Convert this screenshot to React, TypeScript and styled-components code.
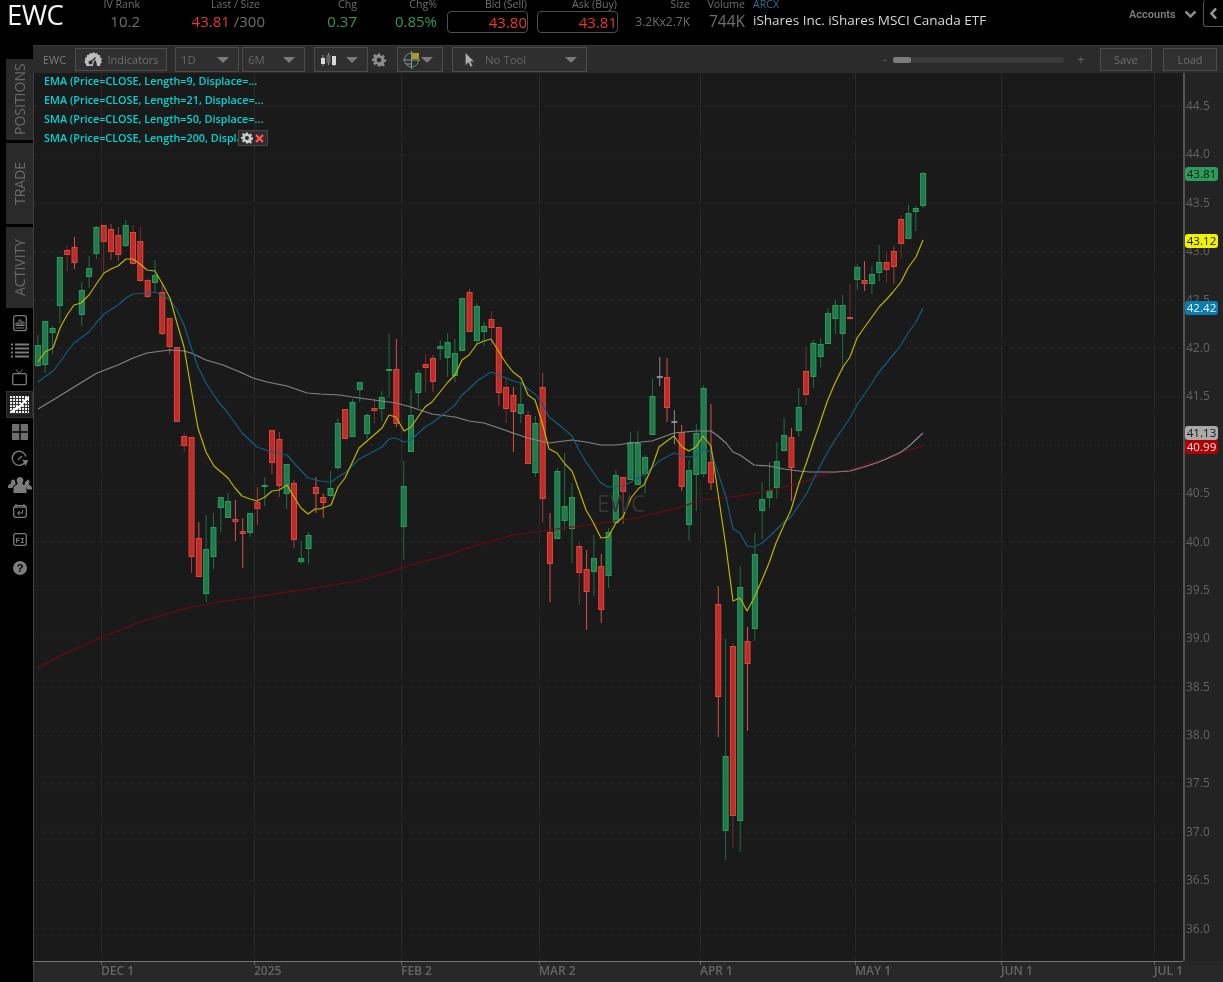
import React from "react";
import styled, { createGlobalStyle } from "styled-components";

const Global = createGlobalStyle`
  html, body { margin: 0; padding: 0; background: #000; }
  * { box-sizing: border-box; }
`;

const FONT = `"Open Sans", "Liberation Sans", sans-serif`;

const Page = styled.div`
  width: 1223px;
  height: 982px;
  overflow: hidden;
  background: #000;
  display: flex;
  flex-direction: column;
  font-family: ${FONT};
  filter: blur(0.35px);
`;

/* ---------- header ---------- */
const Header = styled.header`
  height: 45px;
  display: flex;
  align-items: flex-start;
  padding-left: 7px;
  flex: none;
`;
const Symbol = styled.div`
  width: 65px;
  font-size: 27.5px;
  line-height: 30px;
  color: #f4f4f4;
  font-weight: 400;
  letter-spacing: -0.6px;
`;
const Quote = styled.div<{ $w: number; $ml?: number }>`
  width: ${(p) => p.$w}px;
  margin-left: ${(p) => p.$ml ?? 0}px;
  flex: none;
  display: flex;
  flex-direction: column;
  align-items: flex-end;
`;
const QuoteLabel = styled.div<{ $pr?: number }>`
  height: 11px;
  line-height: 8px;
  padding-right: ${(p) => p.$pr ?? 0}px;
  font-size: 10.6px;
  color: #6d6d6d;
  white-space: nowrap;
`;
const QuoteValue = styled.div<{ $c?: string; $s?: number }>`
  height: 22px;
  line-height: 21px;
  font-size: ${(p) => p.$s ?? 15}px;
  color: ${(p) => p.$c ?? "#6f6f6f"};
  white-space: nowrap;
`;
const Tone = styled.span<{ $c: string }>`
  color: ${(p) => p.$c};
`;
const PriceBox = styled.div`
  width: 81px;
  height: 22px;
  line-height: 20px;
  text-align: right;
  font-size: 15px;
  color: #e63a30;
  border: 1px solid #4e4e4e;
  border-radius: 4px;
`;
const BoxQuote = styled(Quote)`
  align-items: stretch;
  text-align: right;
`;
const Identity = styled.div`
  margin-left: 8px;
  width: 240px;
  flex: none;
`;
const Exchange = styled.div`
  height: 11px;
  line-height: 8px;
  font-size: 10.6px;
  color: #2f6f8f;
`;
const FundName = styled.div`
  height: 22px;
  line-height: 19px;
  font-size: 13.5px;
  color: #d8d8d8;
  white-space: nowrap;
`;
const Accounts = styled.div`
  margin-left: 136px;
  width: 74px;
  flex: none;
  display: flex;
  align-items: center;
  gap: 8px;
  height: 28px;
  font-family: Roboto, "Liberation Sans", sans-serif;
  font-size: 11px;
  font-weight: 600;
  color: #7e7e7e;
  white-space: nowrap;
`;
const BackButton = styled.div`
  width: 20px;
  height: 27px;
  flex: none;
  border: 1px solid #555;
  border-right: none;
  border-top: none;
  border-radius: 3px 0 0 3px;
  display: flex;
  align-items: center;
  justify-content: center;
`;

/* ---------- body ---------- */
const Body = styled.div`
  flex: 1;
  display: flex;
  min-height: 0;
`;
const Rail = styled.nav`
  width: 33px;
  flex: none;
  display: flex;
  flex-direction: column;
  align-items: flex-end;
  padding-top: 14px;
`;
const SideTab = styled.div`
  width: 27px;
  height: 81px;
  margin-bottom: 3px;
  background: #2a2a2a;
  color: #6a6a6a;
  font-size: 14px;
  writing-mode: vertical-rl;
  transform: rotate(180deg);
  text-align: center;
  line-height: 27px;
`;
const RailIcon = styled.div<{ $active?: boolean; $h: number }>`
  width: 27px;
  height: ${(p) => p.$h}px;
  flex: none;
  background: ${(p) => (p.$active ? "#1e1e1e" : "transparent")};
  border: ${(p) => (p.$active ? "1px solid #333" : "none")};
  display: flex;
  align-items: center;
  justify-content: center;
`;
const RailIcons = styled.div`
  display: flex;
  flex-direction: column;
  margin-top: -1px;
`;

const Panel = styled.main`
  flex: 1;
  min-width: 0;
  display: flex;
  flex-direction: column;
  background: #272727;
`;
const Toolbar = styled.div`
  height: 28px;
  flex: none;
  background: #2b2b2b;
  border-top: 1px solid #3a3a3a;
  display: flex;
  align-items: center;
  padding-left: 10px;
  color: #717171;
  font-size: 11px;
`;
const ChartSymbol = styled.span`
  width: 32px;
  flex: none;
  color: #7c7c7c;
`;
const ToolButton = styled.div<{ $w: number; $ml?: number }>`
  width: ${(p) => p.$w}px;
  margin-left: ${(p) => p.$ml ?? 0}px;
  height: 23px;
  flex: none;
  border: 1px solid #4d4d4d;
  background: #303030;
  display: flex;
  align-items: center;
  justify-content: center;
  gap: 5px;
  color: #6e6e6e;
  font-size: 11px;
`;
const SelectBox = styled.div<{ $w: number; $ml?: number; $pl?: number }>`
  width: ${(p) => p.$w}px;
  margin-left: ${(p) => p.$ml ?? 0}px;
  height: 25px;
  flex: none;
  border: 1px solid #4d4d4d;
  background: #2f2f2f;
  display: flex;
  align-items: center;
  justify-content: space-between;
  padding: 0 9px 0 ${(p) => p.$pl ?? 5}px;
  color: #666;
  font-size: 11.4px;
`;
const SelectLabel = styled.span`
  display: flex;
  align-items: center;
  gap: 9px;
`;
const Caret = styled.span`
  width: 0;
  height: 0;
  border-left: 6px solid transparent;
  border-right: 6px solid transparent;
  border-top: 6px solid #7a7a7a;
  flex: none;
`;
const PlainIcon = styled.span<{ $ml: number }>`
  margin-left: ${(p) => p.$ml}px;
  display: flex;
  flex: none;
`;
const ZoomGroup = styled.div`
  margin-left: 292px;
  width: 208px;
  flex: none;
  display: flex;
  align-items: center;
  justify-content: flex-start;
  color: #6a6a6a;
  font-size: 12px;
`;
const ZoomSign = styled.span<{ $ml: number }>`
  width: 12px;
  margin-left: ${(p) => p.$ml}px;
  text-align: center;
  flex: none;
`;
const ZoomTrack = styled.div`
  width: 171px;
  height: 6px;
  margin-left: 2px;
  border-radius: 3px;
  background: #3a3a3a;
  display: flex;
  flex: none;
`;
const ZoomThumb = styled.div`
  width: 18px;
  height: 6px;
  border-radius: 2px;
  background: #7c7c7c;
`;

const ChartRow = styled.div`
  flex: 1;
  min-height: 0;
  display: flex;
`;
const ChartArea = styled.div`
  position: relative;
  flex: 1;
  min-width: 0;
  background: #1a1a1a;
  border-left: 1px solid #3f3f3f;
`;
const ChartSvg = styled.svg`
  display: block;
  width: 1149px;
  height: 888px;
`;
const Legend = styled.div`
  position: absolute;
  left: 10px;
  top: 0;
  display: flex;
  flex-direction: column;
`;
const LegendRow = styled.div`
  position: relative;
  height: 19px;
  line-height: 15px;
  font-size: 10.8px;
  font-weight: 600;
  color: #00d4d4;
  white-space: nowrap;
`;
const LegendClip = styled.span`
  display: inline-block;
  width: 194px;
  overflow: hidden;
  vertical-align: top;
`;
const LegendTools = styled.div`
  position: absolute;
  left: 194px;
  top: 0;
  width: 30px;
  height: 16px;
  background: #2c2c2c;
  border: 1px solid #444;
  display: flex;
  align-items: center;
  justify-content: center;
  gap: 1px;
`;
const Watermark = styled.div`
  position: absolute;
  left: 563px;
  top: 413px;
  font-size: 23px;
  color: #333;
  line-height: 34px;
`;
const PriceAxis = styled.aside`
  position: relative;
  width: 40px;
  flex: none;
  background: #232323;
  border-left: 2px solid #555;
  padding-top: 9px;
  padding-left: 1px;
`;
const PriceTick = styled.div`
  height: 48.4px;
  line-height: 48.4px;
  font-size: 12px;
  color: #636363;
`;
const PriceTag = styled.div<{ $bg: string; $fg: string; $top: number }>`
  position: absolute;
  left: 0;
  top: ${(p) => p.$top}px;
  width: 33px;
  height: 14px;
  border-radius: 3px;
  background: ${(p) => p.$bg};
  color: ${(p) => p.$fg};
  font-size: 11.6px;
  line-height: 14px;
  text-align: center;
`;
const TimeAxis = styled.footer`
  height: 21px;
  flex: none;
  background: #282828;
  border-top: 1px solid #767676;
  border-left: 1px solid #3f3f3f;
  display: flex;
  padding-left: 67px;
  margin-right: 40px;
`;
const TimeTick = styled.div<{ $w: number }>`
  position: relative;
  width: ${(p) => p.$w}px;
  flex: none;
  font-size: 12px;
  font-weight: 600;
  color: #666;
  line-height: 15px;
  padding-top: 1px;
  white-space: nowrap;
  &::before {
    content: "";
    position: absolute;
    left: 0;
    top: 0;
    width: 1px;
    height: 3px;
    background: #666;
  }
`;

/* ---------- data ---------- */
type C = [number, number, number, number, "g" | "r" | "n"];
const candles: C[] = [
  [345,366,335,367,"g"],[321,365,321,373,"g"],[328,333,326,354,"g"],[257,306,257,323,"g"],[250,255,245,271,"r"],
  [247,263,237,269,"r"],[290,315,282,326,"g"],[268,277,256,288,"g"],[227,254,226,259,"g"],[225,242,225,273,"r"],
  [229,252,224,260,"r"],[235,255,227,261,"r"],[225,246,220,247,"g"],[232,264,225,265,"r"],[241,281,227,282,"r"],
  [280,297,278,298,"r"],[275,283,260,293,"g"],[292,334,285,335,"r"],[318,347,318,354,"r"],[347,422,347,422,"r"],
  [436,446,433,452,"r"],[437,557,437,573,"r"],[538,577,522,577,"r"],[549,594,515,602,"g"],[527,557,513,569,"g"],
  [497,508,497,532,"g"],[501,518,493,518,"g"],[519,522,500,541,"r"],[531,534,518,568,"r"],[513,533,513,537,"g"],
  [502,509,487,525,"r"],[485,487,477,506,"g"],[430,463,430,474,"r"],[439,486,432,497,"r"],[464,494,464,509,"g"],
  [483,540,480,548,"r"],[558,562,541,564,"g"],[535,549,532,564,"g"],[487,494,477,513,"r"],[497,503,494,518,"r"],
  [488,496,471,497,"g"],[423,468,418,470,"g"],[409,439,409,439,"r"],[402,437,399,437,"g"],[382,390,382,402,"g"],
  [415,434,413,439,"g"],[408,411,398,423,"r"],[397,409,391,421,"g"],[369,371,334,397,"g"],[369,424,339,427,"r"],
  [486,527,461,560,"g"],[415,452,390,452,"g"],[373,393,370,408,"g"],[364,368,354,393,"r"],[358,382,355,392,"r"],
  [346,349,340,360,"g"],[342,358,333,377,"g"],[353,376,339,382,"g"],[298,351,298,351,"g"],[292,332,289,332,"r"],
  [306,341,303,345,"g"],[326,332,322,346,"g"],[319,328,311,345,"r"],[327,393,327,406,"r"],[387,409,378,423,"r"],
  [395,412,387,452,"r"],[404,414,382,423,"g"],[415,464,411,464,"r"],[423,473,416,477,"g"],[387,499,373,522,"r"],
  [532,564,513,602,"r"],[471,539,468,539,"g"],[506,521,453,530,"g"],[497,529,483,563,"g"],[546,573,542,605,"r"],
  [569,592,550,630,"r"],[558,572,535,596,"g"],[566,610,554,623,"r"],[532,576,528,588,"g"],[475,523,470,523,"g"],
  [477,492,477,524,"r"],[442,480,432,480,"g"],[443,485,431,485,"g"],[457,474,455,493,"g"],[396,435,378,435,"g"],
  [376,377,357,386,"n"],[377,408,358,422,"r"],[421,422,410,444,"n"],[432,487,425,491,"r"],[470,525,460,541,"g"],
  [433,475,424,511,"g"],[388,474,385,477,"g"],[462,483,404,490,"r"],[604,697,586,737,"r"],[756,831,639,860,"g"],
  [646,816,643,848,"r"],[587,821,566,852,"g"],[641,664,627,731,"r"],[554,629,533,641,"g"],[499,511,482,539,"g"],
  [490,498,462,508,"g"],[461,488,442,499,"g"],[435,451,418,451,"g"],[437,468,428,501,"r"],[407,431,388,437,"g"],
  [371,395,346,405,"r"],[343,377,340,388,"g"],[344,357,338,367,"g"],[313,344,308,344,"g"],[305,319,300,334,"g"],
  [305,334,295,370,"g"],[317,319,284,320,"r"],[267,280,264,290,"g"],[280,284,261,291,"r"],[274,284,266,294,"g"],
  [262,273,245,281,"g"],[262,270,252,282,"r"],[251,267,246,284,"r"],[219,244,215,259,"r"],[213,239,205,239,"g"],
  [208,212,206,231,"g"],[173,206,172,208,"g"],
];
const darkWicks = new Set([4, 9, 13, 14, 15, 20, 46, 53, 62, 64, 74, 95, 105, 111, 116, 118]);
const brightWicks = new Set([5, 22, 27, 28, 38, 39, 49, 65, 70, 75, 77, 86, 88, 92, 93, 97, 103, 113]);

const ema9 = "38,362 45,352 53,348 60,328 67,315 74,305 81,303 89,295 97,283 104,273 111,269 118,266 126,259 133,259 140,264 147,270 155,271 162,283 170,298 177,323 184,347 193,400 198,428 206,452 214,466 221,472 228,478 235,488 242,496 250,499 257,501 265,497 272,491 279,490 287,485 294,497 301,508 308,514 315,509 320,509 331,505 338,487 345,478 352,463 359,448 367,441 374,435 382,428 389,415 396,417 404,431 411,427 418,417 425,407 432,402 440,392 448,382 455,375 462,360 469,355 477,344 484,341 491,339 499,352 506,363 513,372 521,378 528,395 535,400 542,422 549,449 557,453 565,464 572,471 579,490 586,510 593,522 601,538 608,537 616,523 623,517 631,498 639,488 644,485 652,467 659,447 667,441 674,436 682,447 689,451 696,447 703,436 711,446 718,493 726,547 733,601 740,598 747,611 754,598 762,580 769,563 776,543 784,525 791,510 799,483 806,464 813,443 820,423 827,402 835,383 843,367 850,357 857,338 864,328 872,317 879,307 886,300 893,292 901,282 908,268 916,257 923,240";
const ema21 = "38,382 53,371 60,362 67,352 74,343 89,332 97,322 104,314 118,305 126,298 133,294 147,293 155,292 162,295 170,300 177,310 184,325 191,347 198,367 206,383 217,400 228,413 242,433 257,447 272,452 287,455 294,463 308,478 320,481 331,482 338,477 345,473 359,459 367,455 382,447 389,439 396,438 404,442 411,440 425,427 432,423 440,417 455,405 462,395 469,389 477,381 491,372 499,375 513,381 521,383 528,389 535,394 542,403 549,417 557,423 565,430 572,436 579,450 586,462 593,472 601,483 608,487 623,486 631,482 640,477 652,468 659,461 674,453 682,456 689,457 696,456 703,449 711,452 718,473 726,497 733,529 740,533 747,546 754,547 762,543 769,537 776,530 784,522 791,517 799,505 807,493 813,480 827,453 835,440 850,418 857,405 872,383 879,372 893,355 901,345 908,333 916,322 923,308";
const sma50 = "38,409 53,400 74,387 97,373 118,365 133,358 147,353 162,351 170,350 184,351 191,353 206,360 223,365 240,372 253,378 267,382 287,386 307,393 320,394 340,395 352,397 374,400 396,403 411,407 432,414 455,417 469,421 484,423 499,428 513,433 528,438 549,443 572,440 586,442 601,445 616,445 631,443 652,441 674,433 696,431 711,431 718,436 726,443 733,452 740,455 754,465 769,466 784,469 799,471 810,472 835,472 850,471 864,467 879,462 886,459 901,452 908,447 923,433";
const sma200 = "38,668 60,656 100,638 140,622 180,610 217,602 243,599 287,592 320,587 353,582 383,574 411,565 448,555 477,545 513,535 549,530 587,525 623,520 640,517 674,509 696,502 711,499 740,496 762,492 784,487 810,480 820,475 850,470 872,462 893,457 908,450 923,446";

const vGrid = [101, 254, 401, 539, 700, 855, 1001, 1154];
const hGrid = Array.from({ length: 18 }, (_, i) => 106.5 + i * 48.38);
const prices = ["44.5","44.0","43.5","43.0","42.5","42.0","41.5","41.0","40.5","40.0","39.5","39.0","38.5","38.0","37.5","37.0","36.5","36.0"];
const legends = [
  "EMA (Price=CLOSE, Length=9, Displace=...",
  "EMA (Price=CLOSE, Length=21, Displace=...",
  "SMA (Price=CLOSE, Length=50, Displace=...",
];
const timeTicks: [string, number][] = [
  ["DEC 1", 153], ["2025", 147], ["FEB 2", 138], ["MAR 2", 161], ["APR 1", 155], ["MAY 1", 146], ["JUN 1", 153], ["JUL 1", 29],
];
const tags = [
  { v: "43.81", bg: "#2a9d5c", fg: "#0b1a10", top: 94 },
  { v: "43.12", bg: "#f2f200", fg: "#1a1a00", top: 161 },
  { v: "42.42", bg: "#0a7db0", fg: "#e8f6fb", top: 228 },
  { v: "41.13", bg: "#a9a9a9", fg: "#151515", top: 353 },
  { v: "40.99", bg: "#b00000", fg: "#f4e6e6", top: 367 },
];

/* ---------- drawings ---------- */
const Gear = ({ size = 14, color = "#8a8a8a" }: { size?: number; color?: string }) => (
  <svg width={size} height={size} viewBox="0 0 24 24">
    <path
      fill={color}
      fillRule="evenodd"
      d="M10 1h4l.6 3.2 2 .8 2.7-1.9 2.8 2.8-1.9 2.7.8 2 3 .6v4l-3 .6-.8 2 1.9 2.7-2.8 2.8-2.7-1.9-2 .8L14 23h-4l-.6-3.2-2-.8-2.7 1.9-2.8-2.8 1.9-2.7-.8-2L0 14v-4l3-.6.8-2L1.9 4.7l2.8-2.8 2.7 1.9 2-.8zM12 8a4 4 0 1 0 0 8 4 4 0 0 0 0-8z"
    />
  </svg>
);

const CandleGlyph = () => (
  <svg width="17" height="16" viewBox="0 0 17 16">
    <path d="M3 3v11M8.5 1v12M14 5v9" stroke="#9a9a9a" strokeWidth="1" />
    <rect x="1" y="6" width="4" height="6" fill="#d8d8d8" />
    <rect x="6.5" y="3" width="4" height="8" fill="#666" />
    <rect x="12" y="4" width="4" height="9" fill="#d8d8d8" />
  </svg>
);
const SpeedGlyph = () => (
  <svg width="19" height="17" viewBox="0 0 19 17">
    <path fill="#bdbdbd" d="M9.5 1 11 2.6 13.2 2l.8 2 2.2.3-.1 2.2 1.9 1.1-1 2 1 2-1.8 1.1V15h-3l-1-4-1-2.5-1.7 3.3-.7 3.2H2.6l-1-2.3L0.4 11l1-2L.8 7l1.9-.8.2-2.2 2.2-.2.9-1.9 2 .6z" />
    <circle cx="6.5" cy="11.5" r="2" fill="#2f2f2f" />
    <path d="m6.5 11.5 5-5" stroke="#2f2f2f" strokeWidth="1.4" />
  </svg>
);
const DrawGlyph = () => (
  <svg width="17" height="18" viewBox="0 0 17 18">
    <circle cx="8.5" cy="9" r="7" fill="none" stroke="#6a8a8a" strokeWidth="1" />
    <path d="M0 9h17M8.5 0v18" stroke="#7d9a9a" strokeWidth="1" />
    <rect x="9" y="2" width="7" height="6" fill="#a89a22" />
    <path d="M3 13h5" stroke="#99a" strokeWidth="1" />
  </svg>
);
const Pointer = () => (
  <svg width="12" height="16" viewBox="0 0 12 16">
    <path d="M1.5 1v12l3-2.6 2 4.4 2-.9-2-4.3H10z" fill="#b0b0b0" stroke="#555" strokeWidth=".5" />
  </svg>
);
const Chevron = () => (
  <svg width="13" height="9" viewBox="0 0 13 9">
    <path d="M1.5 1.5 6.5 6.5 11.5 1.5" fill="none" stroke="#8a8a8a" strokeWidth="2.6" />
  </svg>
);
const CloseX = () => (
  <svg width="11" height="11" viewBox="0 0 11 11">
    <path d="M2 2 9 9M9 2 2 9" stroke="#e23b3b" strokeWidth="2.6" />
    <path d="M2 2 9 9M9 2 2 9" stroke="#f3b5b5" strokeWidth=".5" />
  </svg>
);

const icon = "#7b7b7b";
const railHeights = [27, 27, 27, 27, 27, 27, 26, 26, 30, 27];
const railGlyphs: React.ReactNode[] = [
  <svg width="14" height="17" viewBox="0 0 14 17" key="a">
    <rect x=".7" y=".7" width="12.6" height="15" rx="2" fill="none" stroke={icon} strokeWidth="1.3" />
    <path d="M3 10V8h2v2M6 10V5h2v5M9 10V7h2v3M2.5 10.5h9M2.5 13h9" fill="none" stroke={icon} strokeWidth="1" />
  </svg>,
  <svg width="18" height="15" viewBox="0 0 18 15" key="b">
    <path d="M0 1.5h2M4 1.5h14M0 5.5h2M4 5.5h14M0 9.5h2M4 9.5h14M0 13.5h2M4 13.5h14" stroke={icon} strokeWidth="1.8" />
  </svg>,
  <svg width="15" height="17" viewBox="0 0 15 17" key="c">
    <rect x=".7" y="4.7" width="13.6" height="11" rx="1.5" fill="none" stroke={icon} strokeWidth="1.3" />
    <path d="M4 .5 7 4.5 10.5.5" fill="none" stroke={icon} strokeWidth="1" />
  </svg>,
  <svg width="19" height="18" viewBox="0 0 19 18" key="d">
    <rect width="19" height="18" fill="#efefef" />
    <path d="M2.5 0v18M5.5 0v18M8.5 0v18M11.5 0v18M14.5 0v18M17.5 0v18M0 2.5h19M0 5.5h19M0 8.5h19M0 11.5h19M0 14.5h19M0 17.5h19" stroke="#333" strokeWidth="1" />
    <path d="M1 16.5 6 12.5 10 10.5 17 2.5" fill="none" stroke="#fff" strokeWidth="2.2" />
    <circle cx="17" cy="2.5" r="1.8" fill="#fff" />
  </svg>,
  <svg width="16" height="16" viewBox="0 0 16 16" key="e">
    <path d="M0 0h7.3v7.3H0zM8.7 0H16v7.3H8.7zM0 8.7h7.3V16H0zM8.7 8.7H16V16H8.7z" fill="#6f6f6f" />
  </svg>,
  <svg width="17" height="17" viewBox="0 0 17 17" key="f">
    <path d="M14.5 11.5A7 7 0 1 1 15 6.5" fill="none" stroke={icon} strokeWidth="1.4" />
    <path d="m12.5 10.5 4 .3-2 3.7zM7 10l4-4" fill={icon} stroke={icon} strokeWidth="1.3" />
  </svg>,
  <svg width="24" height="16" viewBox="0 0 24 16" key="g">
    <path fill={icon} d="M12 0a3.3 3.3 0 0 1 2.6 5.4c-.3.7-.3 1.4.5 2 2 1 3.4 2.3 3.4 3.8V16h-13v-4.8c0-1.5 1.4-2.8 3.4-3.8.8-.6.8-1.3.5-2A3.3 3.3 0 0 1 12 0zM5 2.4c1 0 2 .7 2.2 1.7-.2 1 .1 2 .7 2.8-1.6 1-3.3 2.4-3.4 4.2H0v-1.7c0-1.2 1.1-2.2 2.6-3 .7-.4.6-1 .4-1.5A2.5 2.5 0 0 1 5 2.4zM19 2.4a2.5 2.5 0 0 1 2 4c-.2.6-.3 1.1.4 1.5 1.5.8 2.6 1.8 2.6 3v1.7h-4.5c-.1-1.8-1.8-3.2-3.4-4.2.6-.8.9-1.8.7-2.8.2-1 1.2-1.7 2.2-1.7z" />
  </svg>,
  <svg width="14" height="14" viewBox="0 0 14 14" key="h">
    <rect x=".7" y="1.7" width="12.6" height="11.6" rx="2.4" fill="none" stroke={icon} strokeWidth="1.3" />
    <path d="M3 0v3M11 0v3M1 3.2h12" stroke={icon} strokeWidth="1.2" />
    <path d="M9.5 6v3H5M6.5 7 4.8 9l1.7 2" fill="none" stroke={icon} strokeWidth="1.1" />
  </svg>,
  <svg width="14" height="13" viewBox="0 0 14 13" key="i">
    <rect x=".7" y=".7" width="12.6" height="11.6" rx="2" fill="none" stroke={icon} strokeWidth="1.3" />
    <text x="7" y="9.6" textAnchor="middle" fontSize="8" fontFamily="Liberation Mono, monospace" fontWeight="700" fill={icon}>FI</text>
  </svg>,
  <svg width="14" height="14" viewBox="0 0 14 14" key="j">
    <circle cx="7" cy="7" r="7" fill="#7d7d7d" />
    <text x="7" y="11" textAnchor="middle" fontSize="11" fontFamily="Liberation Sans, sans-serif" fontWeight="700" fill="#000">?</text>
  </svg>,
];

const bodyFill = { g: "#1f7a4b", r: "#bf2b27", n: "#8a8a8a" };
const bodyStroke = { g: "#2d9a5e", r: "#e0463e", n: "#8a8a8a" };
const wickColor = (c: C, i: number) => {
  if (c[4] === "n") return "#8a8a8a";
  if (c[4] === "g") return "#1f6e45";
  if (darkWicks.has(i)) return "#6e2f2d";
  if (brightWicks.has(i)) return "#d8504a";
  return "#a23d39";
};

const Chart = () => (
  <ChartSvg viewBox="34 73 1149 888" aria-hidden>
    {hGrid.map((y) => (
      <line key={y} x1="34" x2="1183" y1={y} y2={y} stroke="#2c2c2c" strokeWidth="1" strokeDasharray="2 6" />
    ))}
    {vGrid.map((x) => (
      <line key={x} x1={x + 0.5} x2={x + 0.5} y1="73" y2="961" stroke="#292929" strokeWidth="1" strokeDasharray="62 6" />
    ))}
    {candles.map((c, i) => {
      const x = 37.9 + 7.316 * i;
      return (
        <g key={i}>
          <line x1={x} x2={x} y1={c[2]} y2={c[3]} stroke={wickColor(c, i)} strokeWidth="1" />
          <rect
            x={x - 2.5}
            y={c[0] + 0.5}
            width="5"
            height={Math.max(c[1] - c[0] - 1, 1)}
            fill={bodyFill[c[4]]}
            stroke={bodyStroke[c[4]]}
            strokeWidth="1"
          />
        </g>
      );
    })}
    <polyline points={sma200} fill="none" stroke="#700b12" strokeWidth="1.2" strokeLinejoin="round" />
    <polyline points={sma50} fill="none" stroke="#858585" strokeWidth="1.2" strokeLinejoin="round" />
    <polyline points={ema21} fill="none" stroke="#0f5f80" strokeWidth="1.2" strokeLinejoin="round" />
    <polyline points={ema9} fill="none" stroke="#bcb400" strokeWidth="1.2" strokeLinejoin="round" />
  </ChartSvg>
);

export default function App() {
  return (
    <Page>
      <Global />
      <Header>
        <Symbol>EWC</Symbol>
        <Quote $w={71}>
          <QuoteLabel>IV Rank</QuoteLabel>
          <QuoteValue>10.2</QuoteValue>
        </Quote>
        <Quote $w={125}>
          <QuoteLabel $pr={5}>Last / Size</QuoteLabel>
          <QuoteValue>
            <Tone $c="#e63a30">43.81</Tone> /300
          </QuoteValue>
        </Quote>
        <Quote $w={92}>
          <QuoteLabel>Chg</QuoteLabel>
          <QuoteValue $c="#2f9a57">0.37</QuoteValue>
        </Quote>
        <Quote $w={80}>
          <QuoteLabel>Chg%</QuoteLabel>
          <QuoteValue $c="#2f9a57">0.85%</QuoteValue>
        </Quote>
        <BoxQuote $w={81} $ml={10}>
          <QuoteLabel $pr={1}>Bid (Sell)</QuoteLabel>
          <PriceBox>43.80</PriceBox>
        </BoxQuote>
        <BoxQuote $w={81} $ml={9}>
          <QuoteLabel $pr={1}>Ask (Buy)</QuoteLabel>
          <PriceBox>43.81</PriceBox>
        </BoxQuote>
        <Quote $w={72}>
          <QuoteLabel>Size</QuoteLabel>
          <QuoteValue $s={12}>3.2Kx2.7K</QuoteValue>
        </Quote>
        <Quote $w={55}>
          <QuoteLabel>Volume</QuoteLabel>
          <QuoteValue $s={15.5}>744K</QuoteValue>
        </Quote>
        <Identity>
          <Exchange>ARCX</Exchange>
          <FundName>iShares Inc. iShares MSCI Canada ETF</FundName>
        </Identity>
        <Accounts>
          Accounts <Chevron />
        </Accounts>
        <BackButton>
          <svg width="9" height="13" viewBox="0 0 9 13">
            <path d="M7 1.5 2.5 6.5 7 11.5" fill="none" stroke="#9a9a9a" strokeWidth="2.6" />
          </svg>
        </BackButton>
      </Header>
      <Body>
        <Rail>
          <SideTab>POSITIONS</SideTab>
          <SideTab>TRADE</SideTab>
          <SideTab>ACTIVITY</SideTab>
          <RailIcons>
            {railGlyphs.map((g, i) => (
              <RailIcon key={i} $active={i === 3} $h={railHeights[i]}>
                {g}
              </RailIcon>
            ))}
          </RailIcons>
        </Rail>
        <Panel>
          <Toolbar>
            <ChartSymbol>EWC</ChartSymbol>
            <ToolButton $w={92}>
              <SpeedGlyph />
              Indicators
            </ToolButton>
            <SelectBox $w={64} $ml={8}>
              1D <Caret />
            </SelectBox>
            <SelectBox $w={63} $ml={3}>
              6M <Caret />
            </SelectBox>
            <SelectBox $w={54} $ml={9}>
              <SelectLabel>
                <CandleGlyph />
              </SelectLabel>
              <Caret />
            </SelectBox>
            <PlainIcon $ml={4}>
              <Gear size={14} color="#8c8c8c" />
            </PlainIcon>
            <SelectBox $w={46} $ml={11}>
              <SelectLabel>
                <DrawGlyph />
              </SelectLabel>
              <Caret />
            </SelectBox>
            <SelectBox $w={135} $ml={9} $pl={11}>
              <SelectLabel>
                <Pointer />
                No Tool
              </SelectLabel>
              <Caret />
            </SelectBox>
            <ZoomGroup>
              <ZoomSign $ml={0}>-</ZoomSign>
              <ZoomTrack>
                <ZoomThumb />
              </ZoomTrack>
              <ZoomSign $ml={11}>+</ZoomSign>
            </ZoomGroup>
            <ToolButton $w={52} $ml={13}>
              Save
            </ToolButton>
            <ToolButton $w={54} $ml={11}>
              Load
            </ToolButton>
          </Toolbar>
          <ChartRow>
            <ChartArea>
              <Chart />
              <Watermark>EWC</Watermark>
              <Legend>
                {legends.map((l) => (
                  <LegendRow key={l}>{l}</LegendRow>
                ))}
                <LegendRow>
                  <LegendClip>SMA (Price=CLOSE, Length=200, Displace=...</LegendClip>
                  <LegendTools>
                    <Gear size={12} color="#c8c8c8" />
                    <CloseX />
                  </LegendTools>
                </LegendRow>
              </Legend>
            </ChartArea>
            <PriceAxis>
              {prices.map((p) => (
                <PriceTick key={p}>{p}</PriceTick>
              ))}
              {tags.map((t) => (
                <PriceTag key={t.v} $bg={t.bg} $fg={t.fg} $top={t.top}>
                  {t.v}
                </PriceTag>
              ))}
            </PriceAxis>
          </ChartRow>
          <TimeAxis>
            {timeTicks.map(([t, w]) => (
              <TimeTick key={t} $w={w}>
                {t}
              </TimeTick>
            ))}
          </TimeAxis>
        </Panel>
      </Body>
    </Page>
  );
}
